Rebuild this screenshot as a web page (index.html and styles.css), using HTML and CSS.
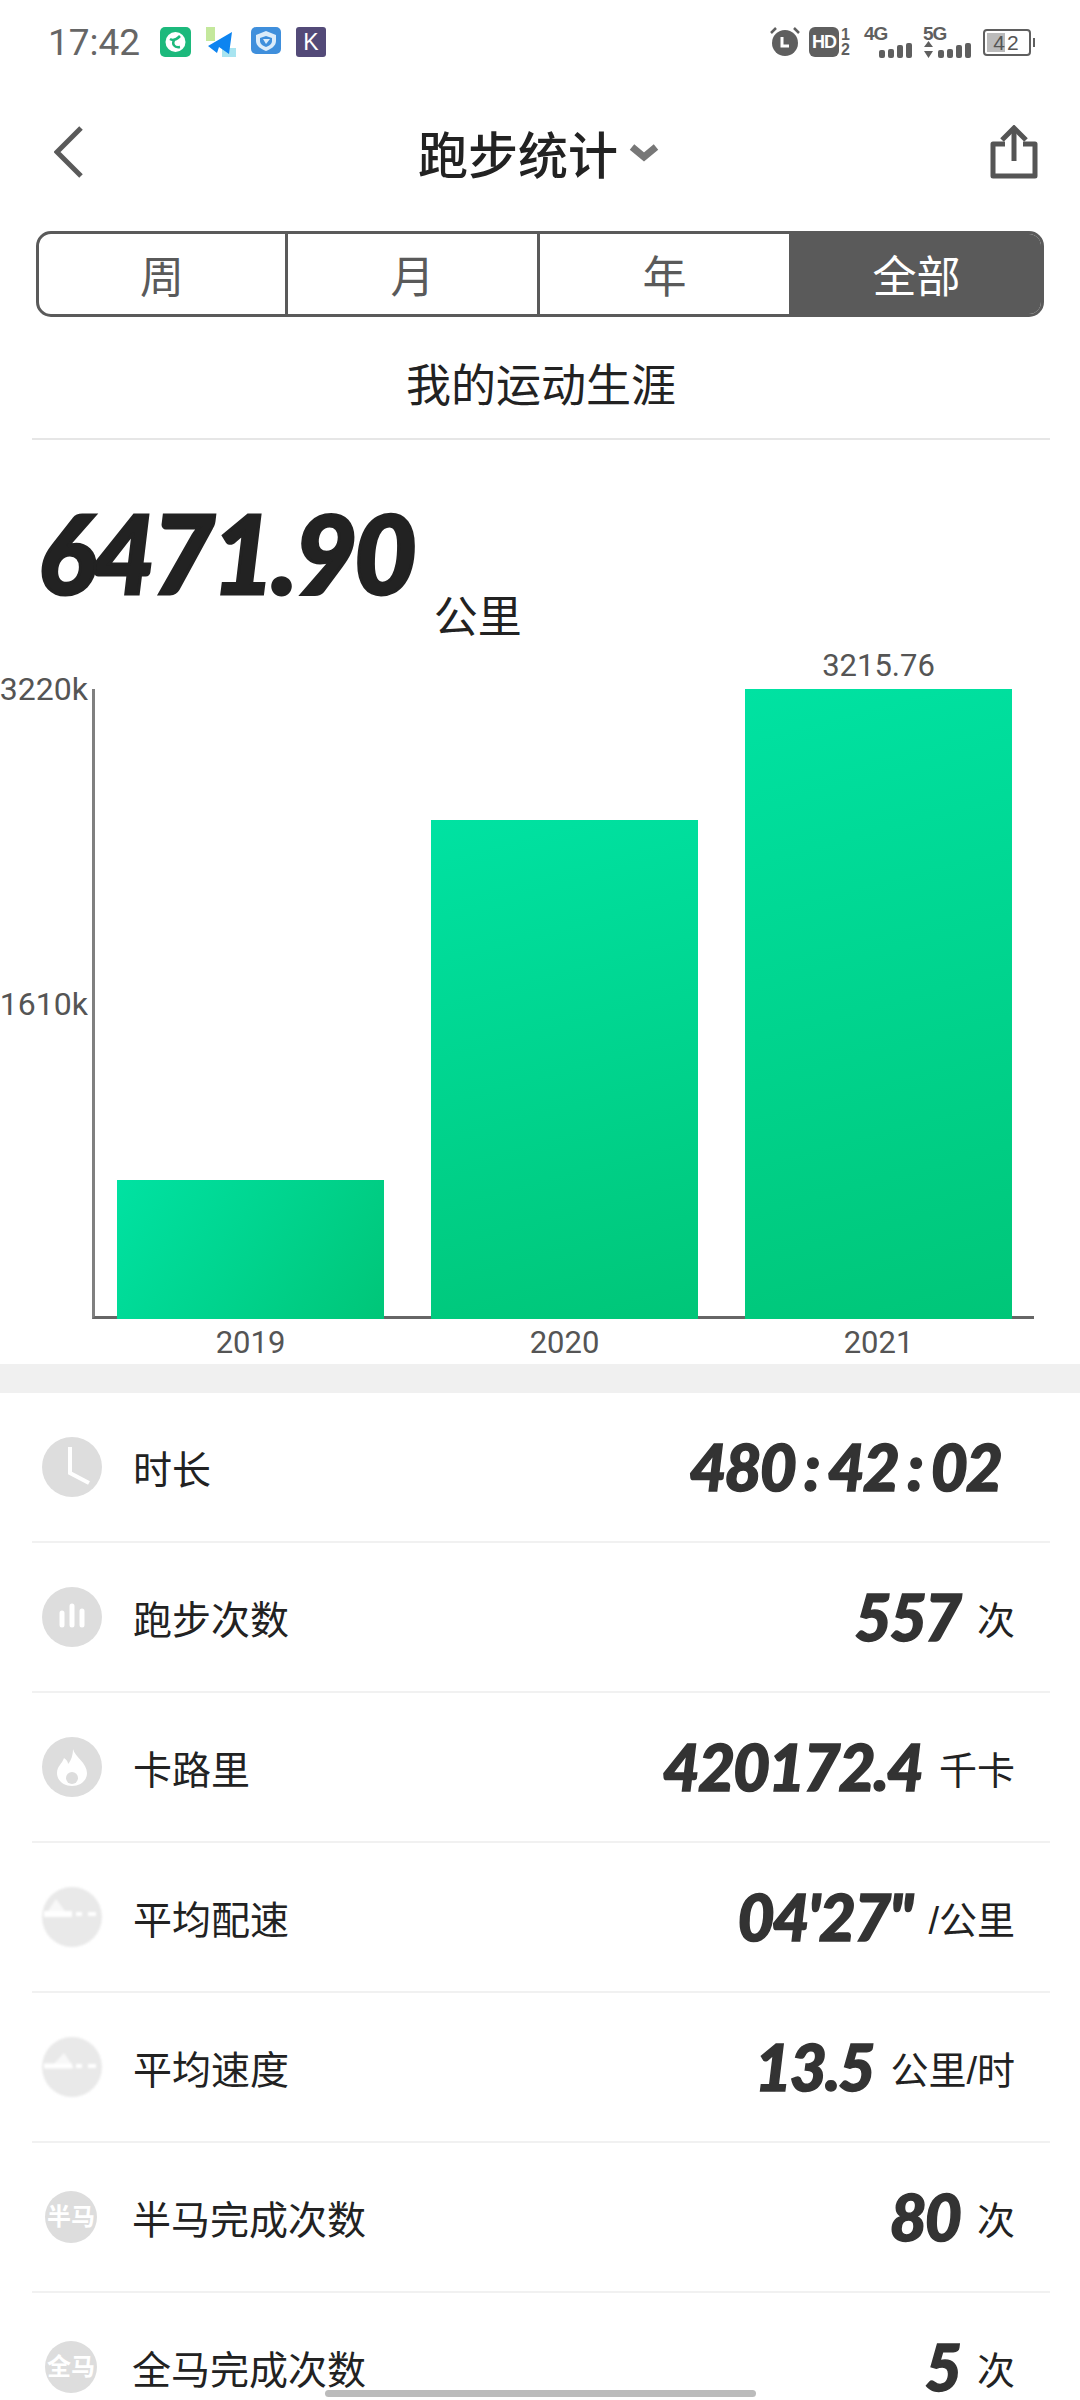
FILE: index.html
```html
<!DOCTYPE html>
<html lang="zh-CN">
<head>
    <meta charset="UTF-8">
    <meta name="viewport" content="width=device-width, initial-scale=1.0">
    <title>跑步统计</title>
    <link rel="stylesheet" href="styles.css">
</head>
<body>
    <!-- 状态栏 -->
    <div class="status-bar">
        <span class="clock">17:42</span>
        <div class="app-icons">
            <svg width="31" height="30" viewBox="0 0 31 30">
                <rect width="31" height="30" rx="5" fill="#1cb97c"/>
                <circle cx="15.500" cy="15" r="10" fill="#fff"/>
                <path d="M10 12c3 2 6 1 10-3M14 13c-2 4 0 8 6 7" fill="none" stroke="#1cb97c" stroke-width="2.500"/>
            </svg>
            <svg width="30" height="30" viewBox="0 0 30 30">
                <rect x="0" y="0" width="9" height="14" fill="#c4e89c"/>
                <rect x="16" y="21" width="14" height="9" fill="#a8e4f0"/>
                <path d="M2 19L26 5L23 27L13 20L11 26Z" fill="#0d84f0"/>
            </svg>
            <svg width="30" height="30" viewBox="0 0 30 30">
                <rect width="30" height="27" rx="5" fill="#3f8fdc"/>
                <path d="M15 4L25 8V14C25 19 20 22 15 24C10 22 5 19 5 14V8Z" fill="#dcecfa"/>
                <path d="M15 9L21 11V14C21 17 18 19 15 20C12 19 9 17 9 14V11Z" fill="#3f8fdc"/>
                <path d="M12 12H19L15 17Z" fill="#dcecfa"/>
            </svg>
            <span class="app-k">K</span>
        </div>
        <div class="sys-icons">
            <svg width="30" height="30" viewBox="0 0 30 30">
                <circle cx="15" cy="16" r="13" fill="#5f5f5f"/>
                <path d="M1 6L6 1M29 6L24 1" stroke="#5f5f5f" stroke-width="2.500"/>
                <path d="M12 10V19H19" fill="none" stroke="#fff" stroke-width="3"/>
            </svg>
            <span class="hd">HD</span>
            <span class="sim"><b>1</b><b>2</b></span>
            <span class="net">
                <span class="net-name">4G</span>
                <span class="bars"><i class="b1"></i><i class="b2"></i><i class="b3"></i><i class="b4"></i></span>
            </span>
            <span class="net">
                <span class="net-name">5G</span>
                <span class="bars">
                    <svg class="updown" width="11" height="17" viewBox="0 0 11 17"><path d="M5.500 0L10 6H1ZM1 10H10L5.500 17Z" fill="#5f5f5f"/></svg>
                    <i class="b1"></i><i class="b2"></i><i class="b3"></i><i class="b4"></i>
                </span>
            </span>
            <span class="battery"><span class="battery-level"></span><span class="battery-num">42</span></span>
        </div>
    </div>

    <!-- 标题栏 -->
    <div class="nav-bar">
        <svg class="back" width="29" height="52" viewBox="0 0 29 52">
            <path d="M27 2L3 26L27 50" fill="none" stroke="#5a5a5a" stroke-width="5"/>
        </svg>
        <div class="nav-title">
            <span>跑步统计</span>
            <svg width="30" height="19" viewBox="0 0 30 19">
                <path d="M3 4L15 14L27 4" fill="none" stroke="#777" stroke-width="7"/>
            </svg>
        </div>
        <svg class="share" width="48" height="54" viewBox="0 0 48 54">
            <path d="M15 19H3V51H45V19H33" fill="none" stroke="#555" stroke-width="5" stroke-linejoin="round"/>
            <path d="M24 36V5" stroke="#555" stroke-width="5"/>
            <path d="M12 15L24 3L36 15" fill="none" stroke="#555" stroke-width="5"/>
        </svg>
    </div>

    <!-- 时间切换 -->
    <div class="tabs">
        <div class="tab tab-first">周</div>
        <div class="tab">月</div>
        <div class="tab">年</div>
        <div class="tab active">全部</div>
    </div>

    <div class="subtitle">我的运动生涯</div>

    <div class="total">
        <span class="total-num">6471.90</span>
        <span class="total-unit">公里</span>
    </div>

    <!-- 柱状图 -->
    <div class="chart">
        <div class="y-axis">
            <span>3220k</span>
            <span>1610k</span>
            <span>&nbsp;</span>
        </div>
        <div class="plot-wrap">
            <div class="plot">
                <div class="bar bar-short" style="height: 139px"></div>
                <div class="bar" style="height: 499px"></div>
                <div class="bar" style="height: 630px"><span class="bar-value">3215.76</span></div>
            </div>
            <div class="x-axis">
                <span>2019</span>
                <span>2020</span>
                <span>2021</span>
            </div>
        </div>
    </div>

    <div class="band"></div>

    <!-- 数据列表 -->
    <div class="stats">
        <div class="row">
            <span class="row-icon">
                <svg width="60" height="60" viewBox="0 0 60 60"><path d="M28 10V36L47 46" fill="none" stroke="#fff" stroke-width="4"/></svg>
            </span>
            <span class="row-label">时长</span>
            <span class="row-value no-unit"><span class="num">480<span class="colon">:</span>42<span class="colon">:</span>02</span></span>
        </div>
        <div class="row">
            <span class="row-icon">
                <svg width="60" height="60" viewBox="0 0 60 60"><path d="M20 26V38M30 19V38M40 24V38" stroke="#fff" stroke-width="5" stroke-linecap="round"/></svg>
            </span>
            <span class="row-label">跑步次数</span>
            <span class="row-value"><span class="num">557</span><span class="unit">次</span></span>
        </div>
        <div class="row">
            <span class="row-icon">
                <svg width="60" height="60" viewBox="0 0 60 60"><path d="M31 12C33 20 45 26 45 36C45 44 38 49 30 49C22 49 15 44 15 36C15 29 20 27 22 21C25 23 26 25 26 27C29 24 31 18 31 12Z" fill="#fff"/><circle cx="30" cy="41" r="6" fill="#ddd"/></svg>
            </span>
            <span class="row-label">卡路里</span>
            <span class="row-value"><span class="num">420172.4</span><span class="unit">千卡</span></span>
        </div>
        <div class="row">
            <span class="row-icon row-icon-soft">
                <svg width="60" height="60" viewBox="0 0 60 60"><path d="M2 30L14 12L26 28L30 30H2Z" fill="#f8f8f8"/><path d="M2 27H30" stroke="#fff" stroke-width="6"/><path d="M34 27H40M46 27H54" stroke="#fff" stroke-width="4"/></svg>
            </span>
            <span class="row-label">平均配速</span>
            <span class="row-value"><span class="num">04'27"</span><span class="unit">/公里</span></span>
        </div>
        <div class="row">
            <span class="row-icon row-icon-soft">
                <svg width="60" height="60" viewBox="0 0 60 60"><path d="M8 31L22 16L32 31H8Z" fill="#f8f8f8"/><path d="M2 29H30" stroke="#fff" stroke-width="5"/><path d="M34 29H40M46 29H54" stroke="#fff" stroke-width="4"/></svg>
            </span>
            <span class="row-label">平均速度</span>
            <span class="row-value"><span class="num">13.5</span><span class="unit">公里/时</span></span>
        </div>
        <div class="row">
            <span class="row-icon row-icon-text">半马</span>
            <span class="row-label">半马完成次数</span>
            <span class="row-value"><span class="num">80</span><span class="unit">次</span></span>
        </div>
        <div class="row">
            <span class="row-icon row-icon-text">全马</span>
            <span class="row-label">全马完成次数</span>
            <span class="row-value"><span class="num">5</span><span class="unit">次</span></span>
        </div>
    </div>

    <div class="home-bar"></div>
</body>
</html>
```

FILE: styles.css
```css
html, body {
    margin: 0;
    padding: 0;
    height: 2400px;
    overflow: hidden;
    background-color: #fff;
}

body {
    position: relative;
    font-family: "Liberation Sans", "Noto Sans CJK SC", sans-serif;
    color: #222;
}

/* 状态栏 */
.status-bar {
    height: 84px;
    display: flex;
    align-items: center;
    padding: 0 49px 0 48px;
}

.clock {
    font-family: Roboto, sans-serif;
    font-size: 37px;
    color: #666;
    width: 112px;
}

.app-icons {
    display: flex;
    gap: 15px;
    align-items: center;
}

.app-k {
    width: 30px;
    height: 30px;
    border-radius: 3px;
    background-color: #534a78;
    color: #fff;
    font-size: 23px;
    line-height: 30px;
    text-align: center;
}

.sys-icons {
    margin-left: auto;
    display: flex;
    align-items: center;
    color: #5f5f5f;
}

.hd {
    margin-left: 9px;
    width: 30px;
    height: 30px;
    border-radius: 6px;
    background-color: #5f5f5f;
    color: #fff;
    font-size: 18px;
    font-weight: bold;
    line-height: 30px;
    text-align: center;
    letter-spacing: -1px;
}

.sim {
    display: flex;
    flex-direction: column;
    margin-left: 2px;
    width: 12px;
    font-size: 16px;
    line-height: 15px;
}

.net {
    margin-left: 11px;
    width: 48px;
    height: 32px;
    display: flex;
    flex-direction: column;
}

.net-name {
    font-size: 19px;
    font-weight: bold;
    line-height: 16px;
    letter-spacing: -1px;
}

.bars {
    display: flex;
    justify-content: flex-end;
    align-items: flex-end;
    gap: 3px;
    height: 16px;
}

.bars i {
    display: block;
    width: 6px;
    background-color: #5f5f5f;
    border-radius: 2px;
}

.bars .b1 { height: 8px; }
.bars .b2 { height: 9px; }
.bars .b3 { height: 13px; }
.bars .b4 { height: 15px; }

.updown {
    margin-right: auto;
}

.battery {
    position: relative;
    margin-left: 12px;
    width: 48px;
    height: 27px;
    border: 2px solid #5f5f5f;
    border-radius: 4px;
    box-sizing: border-box;
}

.battery::after {
    content: "";
    position: absolute;
    right: -6px;
    top: 7px;
    width: 2px;
    height: 9px;
    background-color: #5f5f5f;
}

.battery-level {
    position: absolute;
    left: 2px;
    top: 2px;
    bottom: 2px;
    width: 18px;
    background-color: #bbb;
}

.battery-num {
    position: absolute;
    left: 0;
    right: 0;
    top: 0;
    text-align: center;
    font-size: 21px;
    line-height: 23px;
    letter-spacing: 2px;
    color: #555;
}

/* 标题栏 */
.nav-bar {
    position: relative;
    height: 136px;
    display: flex;
    align-items: center;
    justify-content: space-between;
    padding: 0 42px 0 54px;
}

.nav-title {
    position: absolute;
    left: 418px;
    display: flex;
    align-items: center;
    gap: 11px;
    font-size: 50px;
    font-weight: 500;
    color: #222;
}

/* 切换按钮 */
.tabs {
    margin: 11px 36px 0;
    height: 86px;
    box-sizing: border-box;
    display: flex;
    border: 3px solid #5a5a5a;
    border-radius: 15px;
    overflow: hidden;
}

.tab {
    width: 252px;
    display: flex;
    align-items: center;
    justify-content: center;
    font-size: 44px;
    color: #5a5a5a;
    border-right: 3px solid #5a5a5a;
    box-sizing: border-box;
}

.tab-first {
    width: 249px;
}

.tab.active {
    flex: 1;
    background-color: #5a5a5a;
    color: #fff;
    border-right: none;
}

.subtitle {
    margin: 0 30px 0 32px;
    padding: 40px 0 21px;
    line-height: 60px;
    font-size: 45px;
    text-align: center;
    color: #222;
    border-bottom: 2px solid #e6e6e6;
}

/* 总里程 */
.total {
    height: 249px;
    padding-left: 38px;
    display: flex;
    align-items: flex-start;
}

.total-num {
    font-family: Lato, sans-serif;
    font-weight: 900;
    font-style: italic;
    font-size: 108px;
    line-height: 118px;
    letter-spacing: -3px;
    margin-top: 53px;
    color: #222;
    -webkit-text-stroke: 3px #222;
}

.total-unit {
    margin: 148px 0 0 20px;
    font-size: 44px;
    line-height: 60px;
}

/* 图表 */
.chart {
    display: flex;
    height: 675px;
}

.y-axis {
    width: 88px;
    height: 662px;
    margin-top: -16px;
    display: flex;
    flex-direction: column;
    justify-content: space-between;
    align-items: flex-end;
    font-family: Roboto, sans-serif;
    font-size: 32px;
    line-height: 32px;
    color: #555;
}

.plot-wrap {
    margin-left: 4px;
    width: 942px;
}

.plot {
    height: 630px;
    box-sizing: border-box;
    display: flex;
    align-items: flex-end;
    gap: 47px;
    padding-left: 22px;
    border-left: 3px solid #808080;
    border-bottom: 3px solid #666;
}

.bar {
    position: relative;
    width: 267px;
    margin-bottom: -3px;
    background: linear-gradient(165deg, #00e2a2, #00d48e 50%, #00c678);
}

.bar-short {
    background: linear-gradient(125deg, #00e2a2, #00d48e 50%, #00c678);
}

.bar-value {
    position: absolute;
    left: 0;
    right: 0;
    top: -43px;
    text-align: center;
    font-family: Roboto, sans-serif;
    font-size: 31px;
    line-height: 40px;
    color: #555;
}

.x-axis {
    display: flex;
    gap: 47px;
    padding-left: 25px;
    margin-top: 6px;
    font-family: Roboto, sans-serif;
    font-size: 31px;
    line-height: 36px;
    color: #555;
}

.x-axis span {
    width: 267px;
    text-align: center;
}

.band {
    height: 29px;
    background-color: #f0f0f0;
}

/* 列表 */
.stats {
    margin: 0 30px 0 32px;
}

.row {
    height: 148px;
    padding-right: 35px;
    border-bottom: 2px solid #f1f1f1;
    display: flex;
    align-items: center;
}

.row-icon {
    margin-left: 10px;
    width: 60px;
    height: 60px;
    flex-shrink: 0;
    border-radius: 50%;
    background-color: #ddd;
}

.row-icon svg {
    display: block;
}

.row-icon-soft {
    background-color: #e9e9e9;
    filter: blur(1px);
}

.row-icon-text {
    margin: 0 4px 0 13px;
    width: 52px;
    height: 52px;
    color: #fff;
    font-size: 24px;
    font-weight: bold;
    line-height: 52px;
    text-align: center;
    white-space: nowrap;
}

.row-label {
    margin-left: 31px;
    font-size: 39px;
    color: #222;
}

.row-value {
    margin-left: auto;
    display: flex;
    align-items: center;
}

.row-value.no-unit {
    margin-right: 14px;
}

.num {
    font-family: Lato, sans-serif;
    font-weight: 900;
    font-style: italic;
    font-size: 64px;
    line-height: 60px;
    letter-spacing: -2px;
    color: #333;
    -webkit-text-stroke: 1.5px #333;
}

.colon {
    margin: 0 9px;
}

.unit {
    margin-left: 17px;
    font-size: 38px;
    color: #222;
}

.home-bar {
    position: absolute;
    left: 325px;
    bottom: 3px;
    width: 431px;
    height: 7px;
    border-radius: 4px;
    background-color: #bbb;
}
```
